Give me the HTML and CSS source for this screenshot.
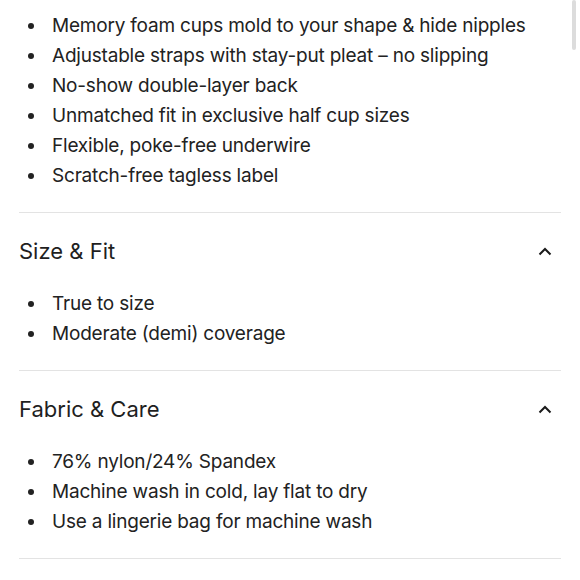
FILE: index.html
```html
<!DOCTYPE html>
<html>
<head>
<meta charset="utf-8">
<link rel="stylesheet" href="styles.css">
</head>
<body>
<div class="page">
  <section class="section first">
    <ul class="list">
      <li>Memory foam cups mold to your shape &amp; hide nipples</li>
      <li>Adjustable straps with stay-put pleat – no slipping</li>
      <li>No-show double-layer back</li>
      <li>Unmatched fit in exclusive half cup sizes</li>
      <li>Flexible, poke-free underwire</li>
      <li>Scratch-free tagless label</li>
    </ul>
  </section>
  <section class="section">
    <div class="header">
      <h2 class="title">Size &amp; Fit</h2>
      <svg class="chev" width="14" height="9" viewBox="0 0 14 9"><path d="M1.5 7.5 L7 2 L12.5 7.5" fill="none" stroke="#1a1a1a" stroke-width="2"/></svg>
    </div>
    <ul class="list">
      <li>True to size</li>
      <li>Moderate (demi) coverage</li>
    </ul>
  </section>
  <section class="section">
    <div class="header">
      <h2 class="title">Fabric &amp; Care</h2>
      <svg class="chev" width="14" height="9" viewBox="0 0 14 9"><path d="M1.5 7.5 L7 2 L12.5 7.5" fill="none" stroke="#1a1a1a" stroke-width="2"/></svg>
    </div>
    <ul class="list">
      <li>76% nylon/24% Spandex</li>
      <li>Machine wash in cold, lay flat to dry</li>
      <li>Use a lingerie bag for machine wash</li>
    </ul>
  </section>
  <div class="end"></div>
</div>
<div class="scrollbar"></div>
</body>
</html>
```
FILE: styles.css
```css
html, body {
  margin: 0;
  padding: 0;
  background: #fff;
}
body {
  font-family: Inter, "Liberation Sans", sans-serif;
  color: #222;
}
.page {
  padding: 11px 19px 0 19px;
}
.section {
  border-bottom: 1px solid #e3e3e3;
  padding-bottom: 21px;
}
.header {
  display: flex;
  align-items: center;
  justify-content: space-between;
  padding: 24px 9px 24px 0;
}
.title {
  margin: 0;
  font-size: 22px;
  line-height: 28px;
  font-weight: 400;
  color: #1f1f1f;
}
.chev {
  display: block;
}
.list {
  list-style: none;
  margin: 0;
  padding: 0;
}
.list li {
  position: relative;
  padding-left: 33px;
  font-size: 19px;
  line-height: 30px;
  letter-spacing: -0.2px;
}
.list li::before {
  content: "";
  position: absolute;
  left: 9px;
  top: 12px;
  width: 6px;
  height: 6px;
  border-radius: 50%;
  background: #222;
}
.scrollbar {
  position: absolute;
  top: 0;
  left: 572px;
  width: 4px;
  height: 50px;
  border-radius: 2px;
  background: #dcdcdc;
}
```
